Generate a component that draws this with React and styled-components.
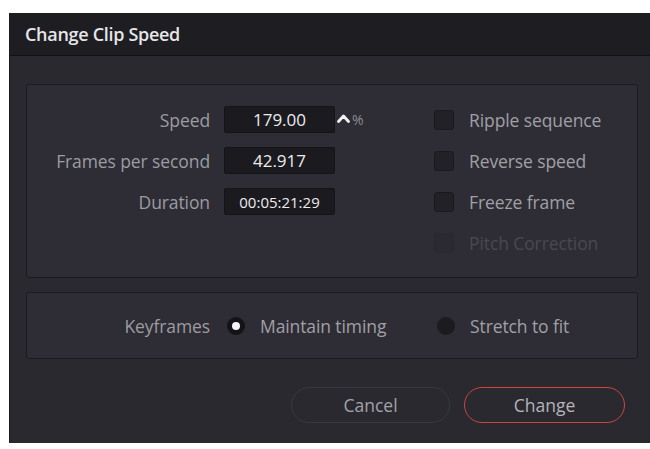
import React from "react";
import styled, { createGlobalStyle } from "styled-components";

const GlobalStyle = createGlobalStyle`
  html, body { margin: 0; padding: 0; background: #ffffff; }
  body { font-family: "Open Sans", "Liberation Sans", sans-serif; }
  * { box-sizing: border-box; }
`;

const Page = styled.div`
  width: 650px;
  height: 449px;
  padding: 13px 0 0 9px;
  overflow: hidden;
`;

const Dialog = styled.div`
  width: 641px;
  height: 430px;
  background: #2a2930;
  display: flex;
  flex-direction: column;
  border-left: 1px solid #1b1a1f;
`;

const TitleBar = styled.div`
  height: 43px;
  background: #1e1d22;
  border-bottom: 1px solid #131216;
  display: flex;
  align-items: center;
  padding-left: 15px;
  color: #e6e6e8;
  font-size: 18px;
  font-weight: 600;
  letter-spacing: -0.3px;
`;

const Body = styled.div`
  flex: 1;
  display: flex;
  flex-direction: column;
  padding: 28px 12px 20px 16px;
`;

const Panel = styled.div`
  background: #2e2d35;
  border: 1px solid #1b1a1f;
  border-radius: 3px;
  display: flex;
  height: ${(p) => p.$h}px;
  align-items: ${(p) => (p.$center ? "center" : "flex-start")};
  padding-top: ${(p) => (p.$center ? 0 : 21)}px;
  margin-bottom: ${(p) => p.$mb || 0}px;
`;

const FieldCol = styled.div`
  width: 407px;
  display: flex;
  flex-direction: column;
  gap: 14px;
`;

const FieldRow = styled.div`
  display: grid;
  grid-template-columns: 183px auto 1fr;
  column-gap: 14px;
  align-items: center;
  height: 27px;
`;

const Label = styled.div`
  text-align: right;
  color: #9c9ca2;
  font-size: 17.5px;
  letter-spacing: -0.1px;
`;

const Input = styled.div`
  width: 111px;
  height: 27px;
  background: #1b1a1f;
  border: 1px solid #141317;
  border-radius: 2px;
  color: #ececee;
  font-size: ${(p) => p.$fs || 17}px;
  display: flex;
  align-items: center;
  justify-content: center;
`;

const Suffix = styled.div`
  display: flex;
  align-items: center;
  margin-left: -12px;
  gap: 2px;
  color: #8c8c92;
  font-size: 14px;
`;

const Caret = styled.svg`
  width: 13px;
  height: 9px;
  margin-top: -3px;
`;

const OptionCol = styled.div`
  display: flex;
  flex-direction: column;
  gap: 14px;
`;

const Option = styled.div`
  display: flex;
  align-items: center;
  gap: 15px;
  height: 27px;
  color: ${(p) => (p.$disabled ? "#4a4850" : "#a0a0a6")};
  font-size: 17.5px;
  letter-spacing: -0.1px;
`;

const Checkbox = styled.div`
  width: 20px;
  height: 20px;
  border-radius: 3px;
  background: ${(p) => (p.$disabled ? "#2b2a30" : "#222127")};
  border: 1px solid ${(p) => (p.$disabled ? "#29282e" : "#1a191e")};
`;

const KeyRow = styled.div`
  display: grid;
  grid-template-columns: 183px 199px auto;
  column-gap: 14px;
  align-items: center;
`;

const RadioOption = styled.div`
  display: flex;
  align-items: center;
  gap: 15px;
  margin-left: ${(p) => p.$ml || 0}px;
  color: #a0a0a6;
  font-size: 17.5px;
  letter-spacing: -0.1px;
`;

const Radio = styled.div`
  width: 18px;
  height: 18px;
  border-radius: 50%;
  background: ${(p) => (p.$on ? "#141317" : "#1c1b20")};
  display: flex;
  align-items: center;
  justify-content: center;
  &::after {
    content: "";
    display: ${(p) => (p.$on ? "block" : "none")};
    width: 8px;
    height: 8px;
    border-radius: 50%;
    background: #f4f4f6;
  }
`;

const Buttons = styled.div`
  margin-top: auto;
  display: flex;
  justify-content: flex-end;
  gap: 14px;
  padding-right: 13px;
`;

const Button = styled.button`
  font-family: inherit;
  width: ${(p) => p.$w}px;
  height: 36px;
  border-radius: 18px;
  background: transparent;
  border: 1.5px solid ${(p) => (p.$primary ? "#c9483c" : "#3a3941")};
  color: ${(p) => (p.$primary ? "#b4b4b9" : "#a2a2a8")};
  font-size: 17.5px;
  display: flex;
  align-items: center;
  justify-content: center;
  padding: 0;
`;

const fields = [
  { label: "Speed", value: "179.00", suffix: true },
  { label: "Frames per second", value: "42.917" },
  { label: "Duration", value: "00:05:21:29", fs: 15 },
];

const options = [
  { label: "Ripple sequence" },
  { label: "Reverse speed" },
  { label: "Freeze frame" },
  { label: "Pitch Correction", disabled: true },
];

export default function App() {
  return (
    <>
      <GlobalStyle />
      <Page>
        <Dialog>
          <TitleBar>Change Clip Speed</TitleBar>
          <Body>
            <Panel $h={194} $mb={14}>
              <FieldCol>
                {fields.map((f) => (
                  <FieldRow key={f.label}>
                    <Label>{f.label}</Label>
                    <Input $fs={f.fs}>{f.value}</Input>
                    {f.suffix ? (
                      <Suffix>
                        <Caret viewBox="0 0 13 9">
                          <polyline
                            points="1.5,7.5 6.5,2 11.5,7.5"
                            fill="none"
                            stroke="#f2f2f4"
                            strokeWidth="2.8"
                            strokeLinecap="round"
                            strokeLinejoin="round"
                          />
                        </Caret>
                        %
                      </Suffix>
                    ) : (
                      <span />
                    )}
                  </FieldRow>
                ))}
              </FieldCol>
              <OptionCol>
                {options.map((o) => (
                  <Option key={o.label} $disabled={o.disabled}>
                    <Checkbox $disabled={o.disabled} />
                    {o.label}
                  </Option>
                ))}
              </OptionCol>
            </Panel>
            <Panel $h={67} $center>
              <KeyRow>
                <Label>Keyframes</Label>
                <RadioOption $ml={3}>
                  <Radio $on />
                  Maintain timing
                </RadioOption>
                <RadioOption>
                  <Radio />
                  Stretch to fit
                </RadioOption>
              </KeyRow>
            </Panel>
            <Buttons>
              <Button $w={159}>Cancel</Button>
              <Button $w={161} $primary>
                Change
              </Button>
            </Buttons>
          </Body>
        </Dialog>
      </Page>
    </>
  );
}
